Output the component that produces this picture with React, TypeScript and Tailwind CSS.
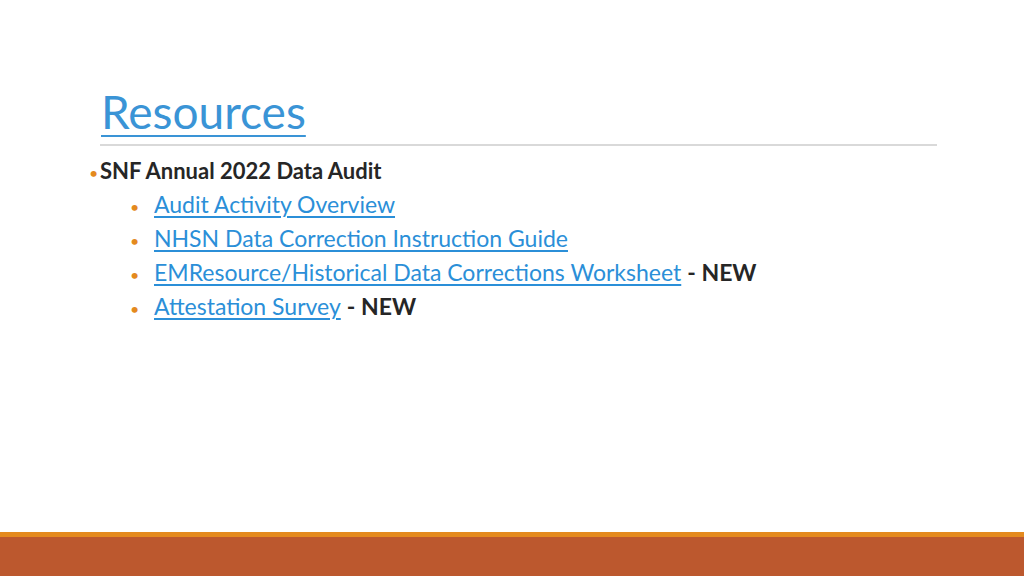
export default function App() {
  const items: { text: string; isNew?: boolean }[] = [
    { text: 'Audit Activity Overview' },
    { text: 'NHSN Data Correction Instruction Guide' },
    { text: 'EMResource/Historical Data Corrections Worksheet', isNew: true },
    { text: 'Attestation Survey', isNew: true },
  ]
  return (
    <div className="w-[1024px] h-[576px] bg-white flex flex-col overflow-hidden" style={{ fontFamily: 'Lato, "Open Sans", sans-serif' }}>
      <div className="flex-1 pt-[84px] pl-[100px] pr-[87px]">
        <h1 className="text-[46px] leading-[56px] text-[#3a94d6] underline decoration-[2px] underline-offset-[6px] pl-[1px]">Resources</h1>
        <div className="h-[2px] bg-[#d9d9d9] mt-[4px]" />
        <div className="mt-[8px] -ml-[11px] text-[23px] leading-[34px] text-[#262626]">
          <div className="flex items-baseline h-[33px]">
            <span className="text-[#e48a1e] w-[11px] text-[16px] leading-[34px]">•</span>
            <span className="font-bold text-[22px] leading-[34px]">SNF Annual 2022 Data Audit</span>
          </div>
          {items.map((it, i) => (
            <div key={i} className="flex items-baseline pl-[41px] h-[34px]">
              <span className="text-[#e48a1e] w-[24px] text-[16px] leading-[34px]">•</span>
              <a className="text-[#2b8fd8] underline underline-offset-[3px] leading-[34px]">{it.text}</a>
              {it.isNew && <span className="font-bold ml-[6px] leading-[34px]">- NEW</span>}
            </div>
          ))}
        </div>
      </div>
      <div className="h-[5px] bg-[#e48a1e]" />
      <div className="h-[39px] bg-[#bc582e]" />
    </div>
  )
}
